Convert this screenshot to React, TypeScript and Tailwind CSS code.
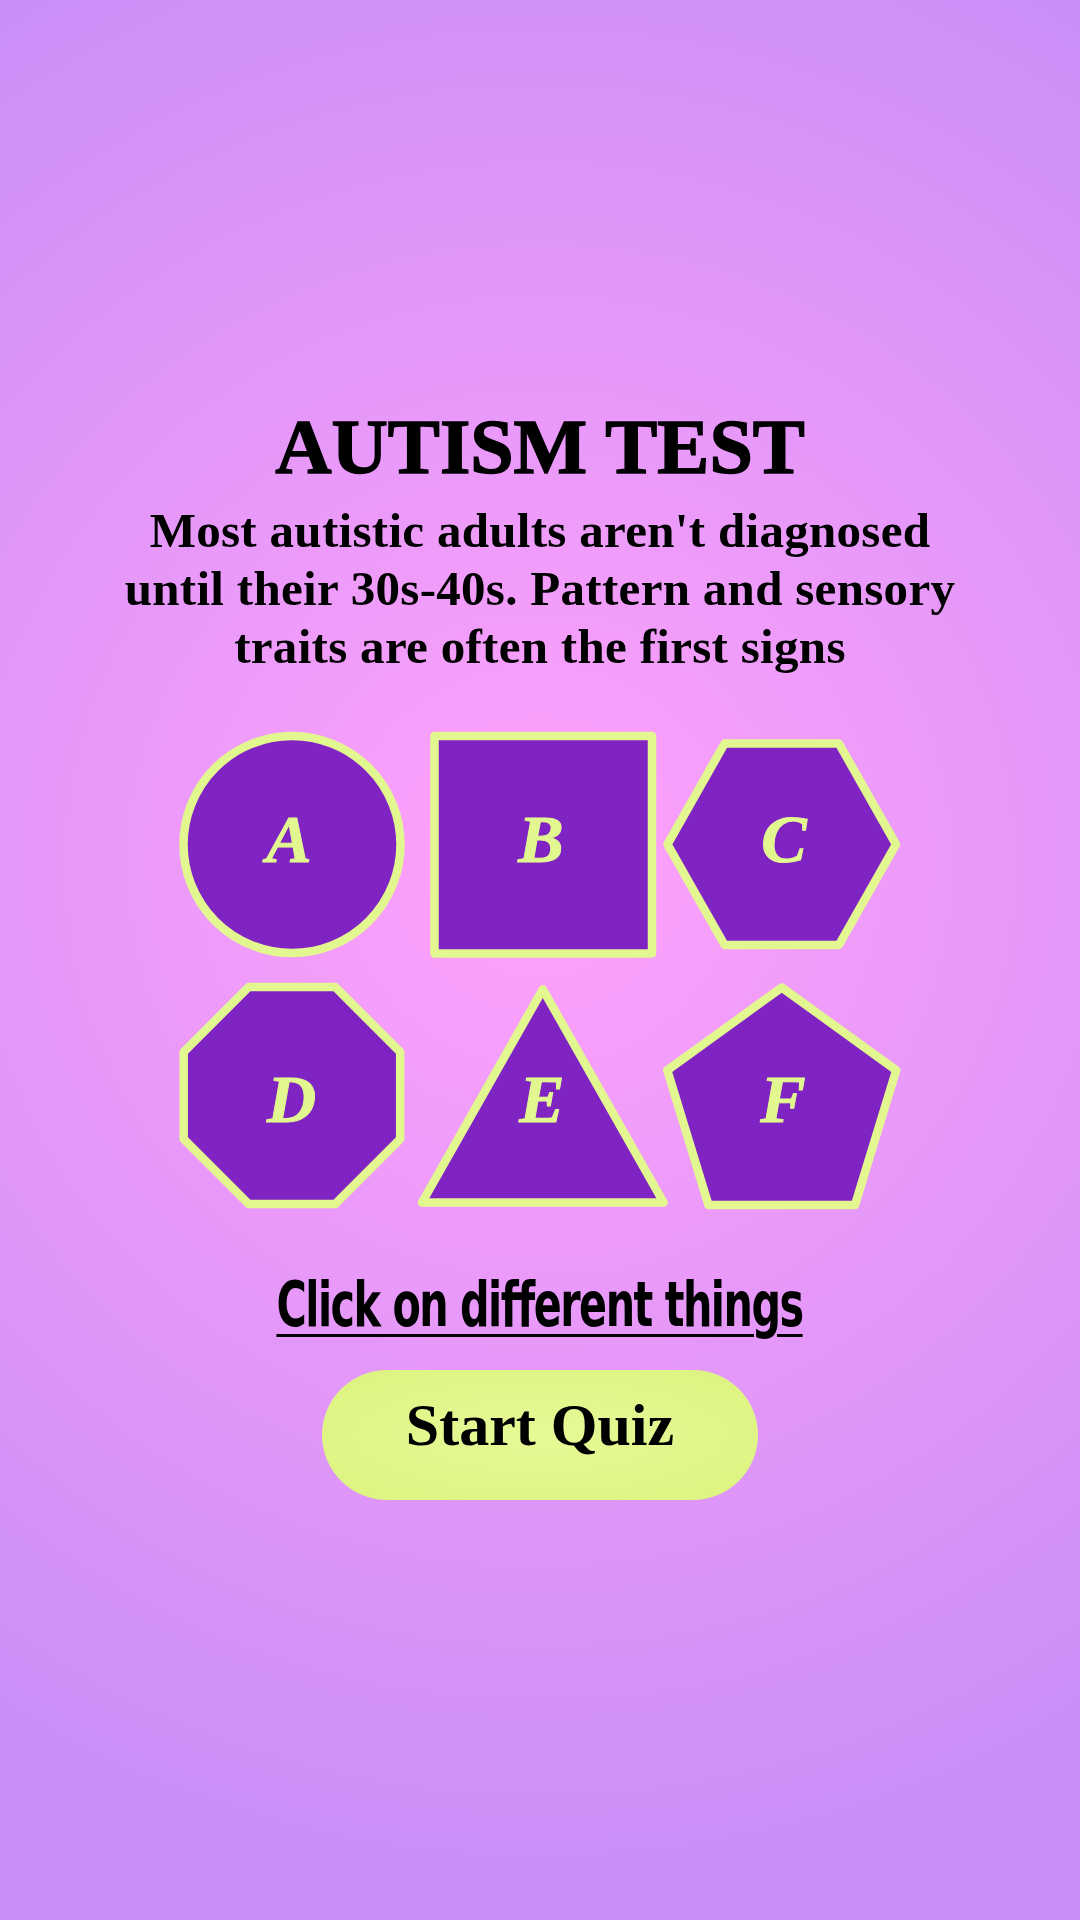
import React from 'react';

const FILL = '#7f23c2';
const LINE = '#e3f791';

type ShapeProps = { letter: string; lx: number; ly: number; children: React.ReactNode };

// one cell of the shape grid; shapes are drawn in cell-local coordinates
const ShapeCell: React.FC<ShapeProps> = ({ letter, lx, ly, children }) => (
  <button className="relative h-[250px] w-full cursor-pointer">
    <svg width="100%" height="250" className="overflow-visible">
      <g fill={FILL} stroke={LINE} strokeWidth={8.5} strokeLinejoin="round">
        {children}
      </g>
      <text
        x={lx}
        y={ly}
        textAnchor="middle"
        fill={LINE}
        stroke={LINE}
        strokeWidth={1}
        fontSize={68}
        fontWeight={700}
        fontStyle="italic"
        fontFamily="'Liberation Serif', serif"
      >
        {letter}
      </text>
    </svg>
  </button>
);

export default function App() {
  return (
    <div className="min-h-screen w-full bg-[radial-gradient(circle_at_50%_45%,#fba0fb_8%,#c98ef7_88%)] flex flex-col items-center pt-[408px] pb-20">
      <h1 className="font-['Liberation_Serif',serif] font-bold text-[78px] leading-none text-black text-center [-webkit-text-stroke:1.5px_#000]">
        AUTISM TEST
      </h1>
      <p className="mt-4 font-['Liberation_Serif',serif] font-bold text-[49px] leading-[58px] tracking-[0.3px] text-black text-center">
        <span className="block">Most autistic adults aren't diagnosed</span>
        <span className="block">until their 30s-40s. Pattern and sensory</span>
        <span className="block">traits are often the first signs</span>
      </p>

      <div className="mt-[44px] grid grid-cols-[245px_246px_245px]">
        <ShapeCell letter="A" lx={117} ly={142}>
          <circle cx={120} cy={124.5} r={108.5} />
        </ShapeCell>
        <ShapeCell letter="B" lx={124} ly={142}>
          <rect x={17.5} y={16} width={217.5} height={217.5} />
        </ShapeCell>
        <ShapeCell letter="C" lx={121} ly={142}>
          <polygon points="4.5,124.3 61.6,23.5 175.9,23.5 233,124.3 175.9,225 61.6,225" />
        </ShapeCell>
        <ShapeCell letter="D" lx={119.5} ly={152}>
          <polygon points="76.7,17 163.2,17 228.2,82 228.2,169 163.2,234 76.7,234 11.7,169 11.7,82" />
        </ShapeCell>
        <ShapeCell letter="E" lx={125} ly={152}>
          <polygon points="125.8,19.3 246.6,232.5 5,232.5" />
        </ShapeCell>
        <ShapeCell letter="F" lx={120} ly={152}>
          <polygon points="118.75,17.5 233.2,100.2 192,235 45.5,235 4.3,100.2" />
        </ShapeCell>
      </div>

      <a
        href="#"
        className="mt-[54px] inline-block scale-x-[0.74] font-['DejaVu_Sans_Condensed','DejaVu_Sans',sans-serif] font-bold text-[62px] leading-none tracking-[-2px] text-black underline decoration-[3px] underline-offset-[8px]"
      >
        Click on different things
      </a>

      <button className="mt-[34px] flex h-[130px] w-[436px] items-center justify-center rounded-full bg-[radial-gradient(ellipse_at_center,#e6f997_0%,#dcf47f_100%)] pb-5 font-['Liberation_Serif',serif] font-bold text-[60px] leading-none text-black">
        Start Quiz
      </button>
    </div>
  );
}
